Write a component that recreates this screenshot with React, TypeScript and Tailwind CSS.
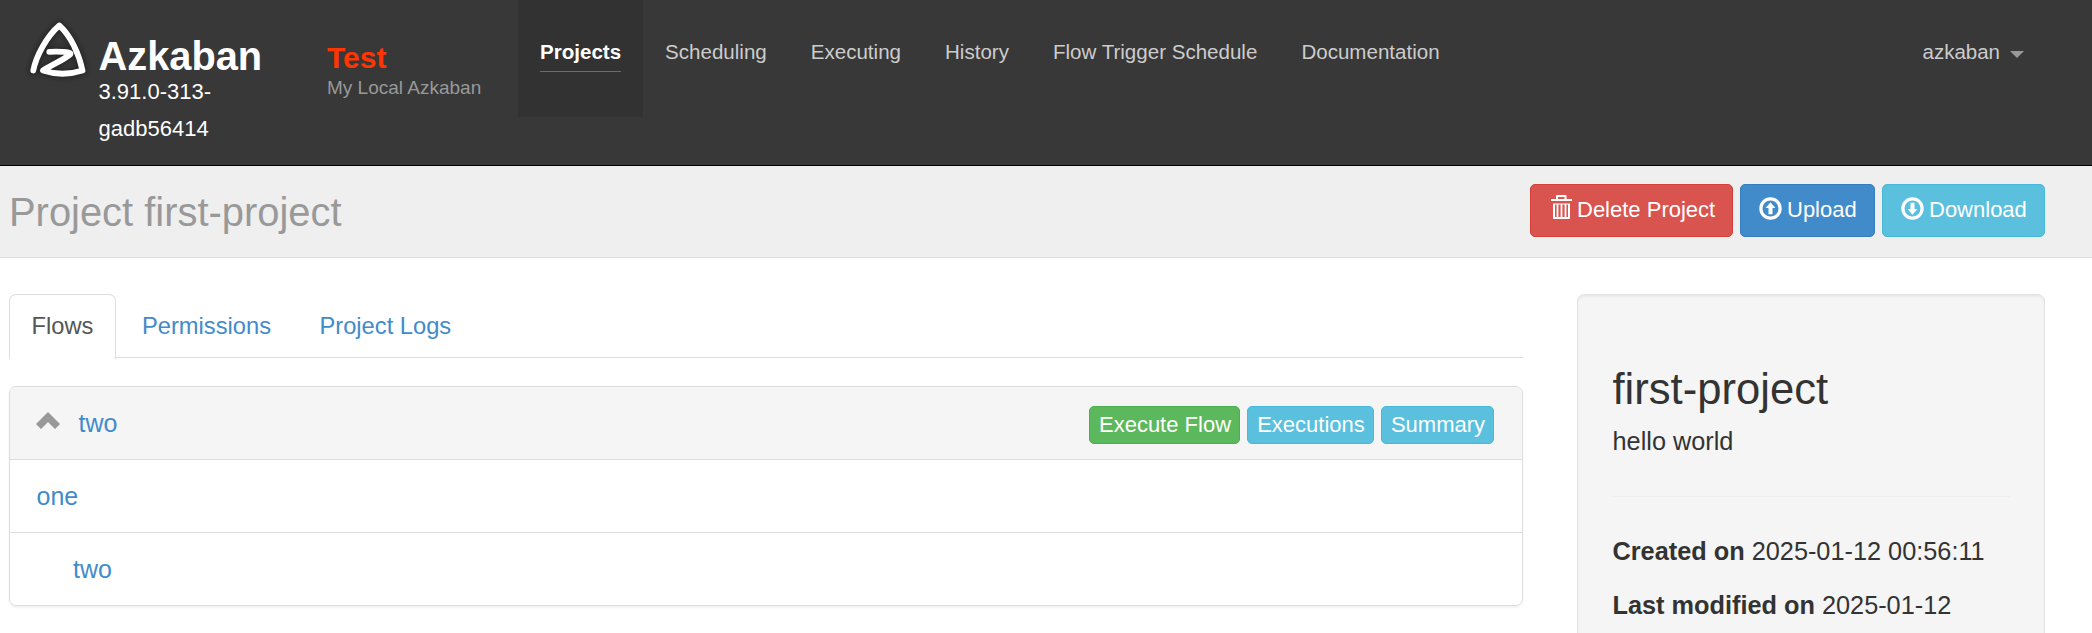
import type { ReactNode } from "react";

const navItems = ["Scheduling", "Executing", "History", "Flow Trigger Schedule", "Documentation"];

const MARK =
  "M12.300 58.500 C15 44 26 24 38.300 13.500 C50 24 58 42 61.500 58.500 C49 62.500 34 62.500 22 58.500 C31 52.500 43 48 49.500 42 C50.500 39.500 36 39.500 28.300 39.800";

function Logo() {
  return (
    <svg viewBox="0 0 72 72" className="mt-3 h-[72px] w-[72px] shrink-0" fill="none" strokeLinecap="round" strokeLinejoin="round">
      <defs>
        <filter id="glow" x="-20%" y="-20%" width="140%" height="140%">
          <feGaussianBlur stdDeviation="2.2" />
        </filter>
      </defs>
      <path d={MARK} strokeWidth="9" stroke="#1c1c1c" opacity="0.7" filter="url(#glow)" />
      <path d={MARK} strokeWidth="5.800" stroke="#fff" />
    </svg>
  );
}

function TrashIcon() {
  return (
    <svg viewBox="0 0 21 24" className="mb-[5px] h-6 w-[21px]" fill="none" stroke="#fff">
      <path d="M0 5h21" strokeWidth="2" />
      <path d="M6 5V1h8.500v4" strokeWidth="2" strokeLinejoin="round" />
      <path d="M3 9v14h15V9" strokeWidth="2" strokeLinejoin="round" />
      <path d="M2 9h17" strokeWidth="1" />
      <path d="M6.500 9v14M10.500 9v14M14.500 9v14" strokeWidth="1.800" />
    </svg>
  );
}

function CircleArrow({ down = false }: { down?: boolean }) {
  return (
    <svg viewBox="0 0 23 23" className={down ? "mb-[3px] h-[23px] w-[23px] rotate-180" : "mb-[3px] h-[23px] w-[23px]"}>
      <circle cx="11.500" cy="11.500" r="9.600" fill="none" stroke="#fff" strokeWidth="3.200" />
      <path d="M11.500 5.200l4.900 5.800h-2.900v6.300H9.500v-6.300H6.600z" fill="#fff" />
    </svg>
  );
}

function HeaderButton({ className, icon, children }: { className: string; icon: ReactNode; children: string }) {
  return (
    <button className={`flex h-[53px] items-center rounded-[5px] border pb-[2px] text-[22px] leading-none text-white ${className}`}>
      {icon}
      <span>{children}</span>
    </button>
  );
}

export default function App() {
  return (
    <div className="h-[633px] overflow-hidden bg-white font-['Liberation_Sans',Arial,sans-serif] text-[#333]">
      <header className="flex h-[166px] items-start border-b border-black bg-[#383838]">
        <div className="flex w-[327px] pl-[21px]">
          <Logo />
          <div className="ml-[5.5px] w-[170px] pt-[39px] text-white">
            <div className="text-[39.8px] font-bold leading-[35px]">Azkaban</div>
            <div className="-mt-px w-[130px] text-[22px] leading-[37px]">
              3.91.0-313-
              <br />
              gadb56414
            </div>
          </div>
        </div>
        <div className="w-[191px] pt-[41px]">
          <div className="text-[30px] font-bold leading-[34px] text-[#ff3601]">Test</div>
          <div className="whitespace-nowrap text-[19px] leading-[26px] text-[#999]">My Local Azkaban</div>
        </div>
        <nav className="flex text-[20.56px] leading-[30px] text-[#ccc]">
          <div className="h-[117px] bg-[#323232] px-[22px] pt-[37px]">
            <div className="border-b border-[#ff3601] pb-1 font-bold text-white">Projects</div>
          </div>
          {navItems.map((item) => (
            <div key={item} className="px-[22px] pt-[37px]">
              {item}
            </div>
          ))}
        </nav>
        <div className="ml-auto flex pr-[68px] pt-[37px] text-[20.5px] leading-[30px] text-[#ccc]">
          azkaban
          <svg viewBox="0 0 14 7" className="ml-2.5 mt-3.5 h-[7px] w-[14px]">
            <path d="M0 0h14L7 7z" fill="#999" />
          </svg>
        </div>
      </header>

      <section className="flex h-[92px] items-start justify-between border-b border-[#ddd] bg-[#efefef] pl-[9px] pr-[47px]">
        <h1 className="pt-6 text-[39.9px] leading-[44px] text-[#999]">Project first-project</h1>
        <div className="flex gap-[7px] pt-[18px]">
          <HeaderButton className="w-[203px] gap-[5px] border-[#d43f3a] bg-[#d9534f] pl-5" icon={<TrashIcon />}>
            Delete Project
          </HeaderButton>
          <HeaderButton className="w-[135px] gap-[5px] border-[#357ebd] bg-[#428bca] pl-[18px]" icon={<CircleArrow />}>
            Upload
          </HeaderButton>
          <HeaderButton className="w-[163px] gap-[5px] border-[#46b8da] bg-[#5bc0de] pl-[18px]" icon={<CircleArrow down />}>
            Download
          </HeaderButton>
        </div>
      </section>

      <main className="flex items-start justify-between pl-[9px] pr-[47px] pt-9">
        <div className="w-[1514px]">
          <div className="flex h-16 border-b border-[#ddd] text-[23.7px] leading-[64px] text-[#428bca]">
            <div className="h-[65px] w-[107px] rounded-t-[7px] border border-b-0 border-[#ddd] bg-white pl-[21.5px] leading-[62px] text-[#555]">Flows</div>
            <div className="ml-[26px]">Permissions</div>
            <div className="ml-[48.5px]">Project Logs</div>
          </div>

          <div className="mt-7 overflow-hidden rounded-[7px] border border-[#ddd] text-[25px] leading-[72px] text-[#428bca] shadow-[0_2px_2px_rgba(0,0,0,0.05)]">
            <div className="flex h-[73px] items-start border-b border-[#ddd] bg-[#f5f5f5] pl-[26px] pr-7">
              <svg viewBox="0 0 24 17" className="mt-[25px] h-[17px] w-6">
                <path d="M12 0l12 12-5 5-7-7-7 7-5-5z" fill="#999" />
              </svg>
              <span className="ml-[18.5px]">two</span>
              <div className="ml-auto flex gap-[7px] pt-[19px] text-[22px] leading-[35px] text-white">
                <button className="h-[38px] w-[151px] rounded-[5px] border border-[#4cae4c] bg-[#5cb85c] pb-px pl-px">Execute Flow</button>
                <button className="h-[38px] w-[127px] rounded-[5px] border border-[#46b8da] bg-[#5bc0de] pb-px pl-px">Executions</button>
                <button className="h-[38px] w-[113px] rounded-[5px] border border-[#46b8da] bg-[#5bc0de] pb-px pl-px">Summary</button>
              </div>
            </div>
            <div className="h-[73px] border-b border-[#ddd] pl-[26.5px]">one</div>
            <div className="h-[72px] pl-[63px]">two</div>
          </div>
        </div>

        <aside className="h-[420px] w-[468px] rounded-[7px] border border-[#e3e3e3] bg-[#f5f5f5] px-[34.5px] pt-[70px] text-[25.3px] leading-9 shadow-[inset_0_2px_2px_rgba(0,0,0,0.05)]">
          <h2 className="text-[43.6px] leading-[48px]">first-project</h2>
          <p className="mt-2.5 h-9">hello world</p>
          <hr className="mt-[37px] border-[#eee]" />
          <p className="mt-9 whitespace-nowrap">
            <b>Created on</b> 2025-01-12 00:56:11
          </p>
          <p className="mt-[18px] whitespace-nowrap">
            <b>Last modified on</b> 2025-01-12
          </p>
        </aside>
      </main>
    </div>
  );
}
